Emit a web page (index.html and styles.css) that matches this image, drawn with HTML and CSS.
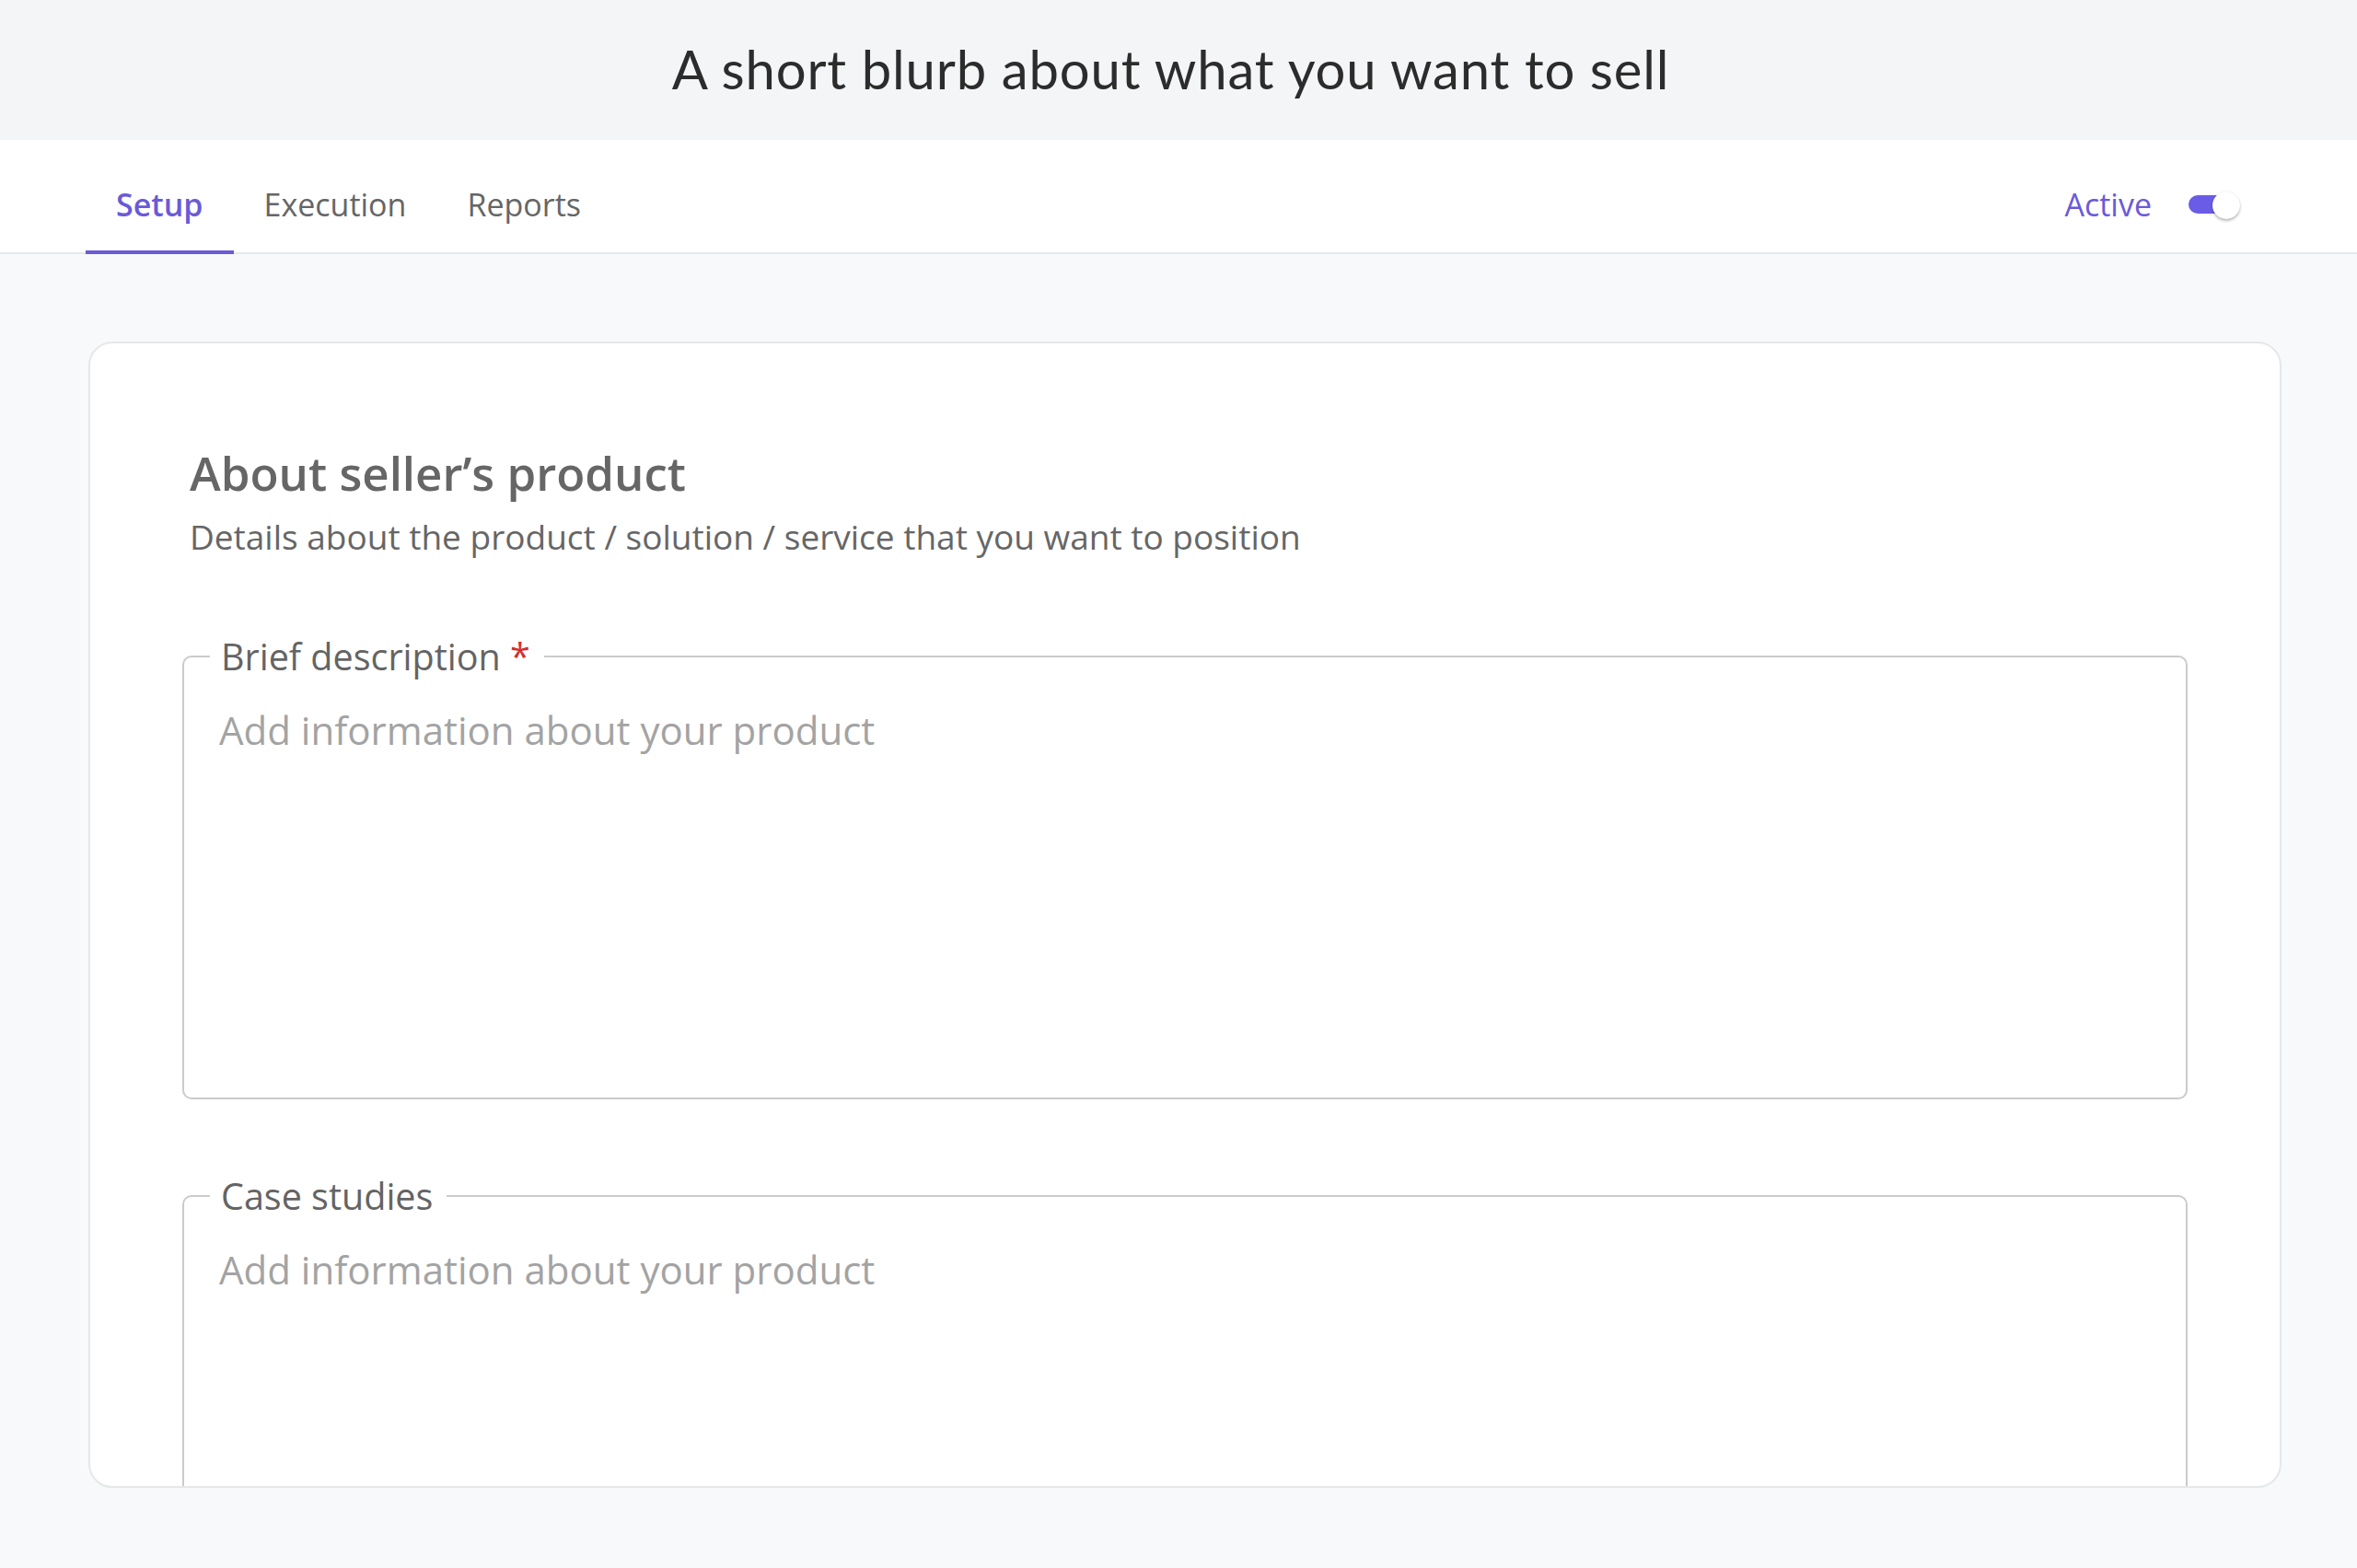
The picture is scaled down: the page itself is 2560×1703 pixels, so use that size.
FILE: index.html
```html
<!DOCTYPE html>
<html lang="en">
<head>
<meta charset="utf-8">
<title>Setup</title>
<link rel="stylesheet" href="styles.css">
</head>
<body>
<header class="title-bar">
  <h1 class="title">A short blurb about what you want to sell</h1>
</header>
<nav class="tabbar">
  <div class="tabs">
    <a class="tab tab-active">Setup</a>
    <a class="tab">Execution</a>
    <a class="tab">Reports</a>
  </div>
  <div class="status">
    <span class="status-label">Active</span>
    <span class="switch"><span class="track"></span><span class="thumb"></span></span>
  </div>
</nav>
<main class="content">
  <section class="card">
    <h2 class="card-title">About seller’s product</h2>
    <p class="card-sub">Details about the product / solution / service that you want to position</p>
    <fieldset class="field">
      <legend class="field-label">Brief description <span class="req">*</span></legend>
      <textarea class="field-input" placeholder="Add information about your product"></textarea>
    </fieldset>
    <fieldset class="field">
      <legend class="field-label">Case studies</legend>
      <textarea class="field-input" placeholder="Add information about your product"></textarea>
    </fieldset>
  </section>
</main>
</body>
</html>
```
FILE: styles.css
```css
html, body {
  margin: 0;
  padding: 0;
}
body {
  background: #f8f9fa;
  font-family: "Open Sans", "Liberation Sans", sans-serif;
  color: #666666;
  height: 1703px;
  overflow: hidden;
}
.title-bar {
  background: #f4f5f7;
  height: 152px;
  display: flex;
  align-items: center;
  justify-content: center;
  padding-right: 17px;
}
.title {
  margin: 0;
  font-family: Lato, "Open Sans", sans-serif;
  font-weight: 400;
  font-size: 58px;
  letter-spacing: 0.85px;
  color: #2c2c2c;
  line-height: 1;
  padding-bottom: 2px;
}
.tabbar {
  background: #ffffff;
  height: 124px;
  box-sizing: border-box;
  box-shadow: inset 0 -2px 0 #e7e8ea;
  display: flex;
  justify-content: space-between;
  align-items: flex-end;
  padding: 0 127px 0 93px;
}
.tabs {
  display: flex;
}
.tab {
  font-size: 34px;
  line-height: 46px;
  padding: 0 33px 31px 33px;
  color: #666666;
  cursor: pointer;
}
.tab-active {
  color: #6a5ad8;
  font-weight: 600;
  box-shadow: inset 0 -4px 0 #6a5ad8;
}
.status {
  display: flex;
  align-items: center;
  gap: 40px;
  padding-bottom: 31px;
}
.status-label {
  font-size: 34px;
  line-height: 46px;
  color: #6a5ad8;
}
.switch {
  position: relative;
  width: 56px;
  height: 32px;
  display: flex;
  align-items: center;
}
.track {
  width: 51px;
  height: 20px;
  border-radius: 10px;
  background: #6b5ce6;
}
.thumb {
  position: absolute;
  right: 0;
  top: 2px;
  width: 30px;
  height: 30px;
  border-radius: 50%;
  background: #ffffff;
  box-shadow: 0 2px 3px rgba(0, 0, 0, 0.28), 0 0 1px rgba(0, 0, 0, 0.12);
}
.content {
  padding: 95px 82px 0 96px;
}
.card {
  background: #ffffff;
  border: 2px solid #e6e7e8;
  border-radius: 26px;
  height: 1245px;
  box-sizing: border-box;
  overflow: hidden;
  padding: 106px 100px 0 100px;
}
.card-title {
  margin: 0;
  padding-left: 8px;
  font-size: 51px;
  font-weight: 600;
  line-height: 69px;
  color: #666666;
}
.card-sub {
  margin: 10px 0 0 0;
  padding-left: 8px;
  font-size: 37px;
  line-height: 50px;
  color: #666666;
}
.field {
  margin: 78px 0 0 0;
  padding: 0;
  border: 2px solid #cbcbcb;
  border-radius: 10px;
  min-width: 0;
}
.field-label {
  margin-left: 28px;
  padding: 0 15px 0 12px;
  font-size: 39.5px;
  line-height: 54px;
  color: #646464;
}
.req {
  color: #d32f2f;
}
.field-input {
  display: block;
  width: 100%;
  box-sizing: border-box;
  height: 428px;
  margin-top: 24px;
  padding: 0 38px;
  border: none;
  outline: none;
  resize: none;
  background: transparent;
  font-family: "Open Sans", "Liberation Sans", sans-serif;
  font-size: 42px;
  line-height: 57px;
  color: #444444;
}
.field-input::placeholder {
  color: #a3a3a3;
  opacity: 1;
}
```
